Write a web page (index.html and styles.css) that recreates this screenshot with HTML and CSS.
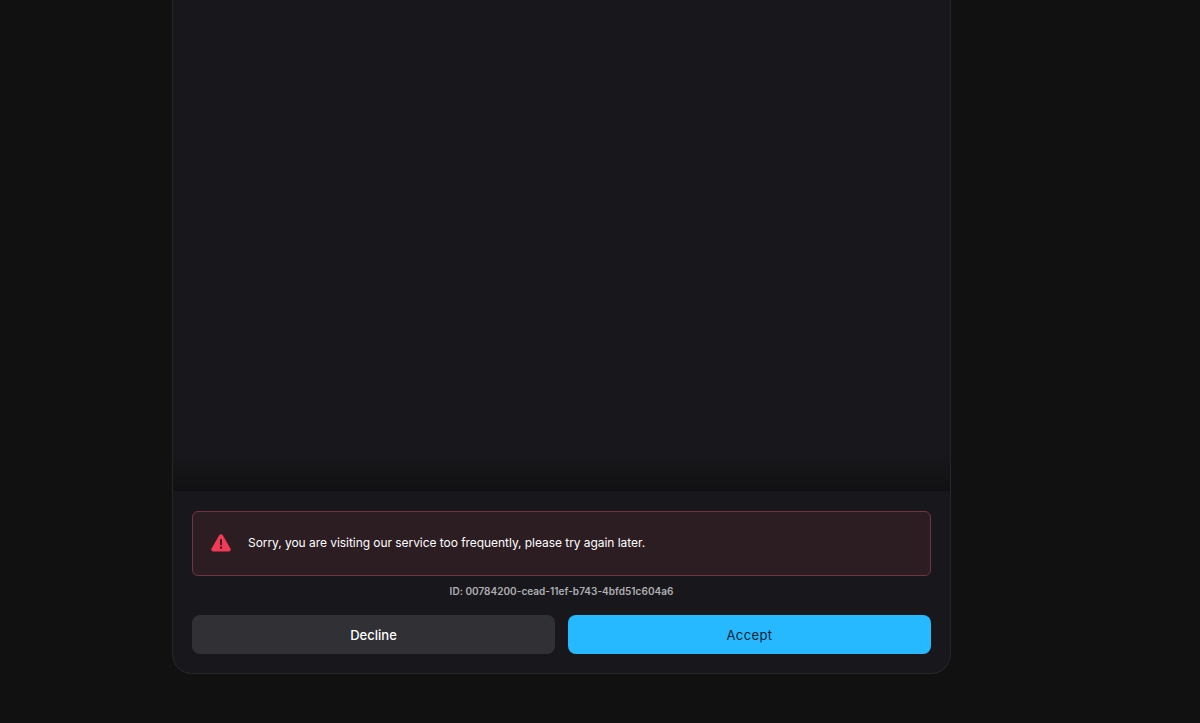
FILE: index.html
```html
<!DOCTYPE html>
<html lang="en">
<head>
<meta charset="utf-8">
<title>Sorry</title>
<link rel="stylesheet" href="styles.css">
</head>
<body>
<main class="page">
  <section class="card">
    <div class="content"></div>
    <footer class="footer">
      <div class="alert">
        <svg class="alert-icon" viewBox="0 0 20 18" width="20" height="18" aria-hidden="true">
          <path fill="#f03a56" fill-rule="evenodd" d="M8.3 1.1a2 2 0 0 1 3.4 0l7.7 13.3a2 2 0 0 1-1.7 3H2.3a2 2 0 0 1-1.7-3ZM9.1 5.2v6h1.8v-6ZM10 12.4a1.2 1.2 0 1 0 0 2.4 1.2 1.2 0 0 0 0-2.4Z"/>
        </svg>
        <p class="alert-text">Sorry, you are visiting our service too frequently, please try again later.</p>
      </div>
      <p class="request-id">ID: 00784200-cead-11ef-b743-4bfd51c604a6</p>
      <div class="actions">
        <button class="btn btn-decline" type="button">Decline</button>
        <button class="btn btn-accept" type="button">Accept</button>
      </div>
    </footer>
  </section>
</main>
</body>
</html>
```
FILE: styles.css
```css
* { box-sizing: border-box; }
html, body { margin: 0; height: 100%; }
body {
  background: #111111;
  font-family: Inter, "Liberation Sans", sans-serif;
  color: #fff;
  overflow: hidden;
}
.page {
  height: 723px;
  padding: 0 249px 49px 172px;
  display: flex;
}
.card {
  flex: 1;
  display: flex;
  flex-direction: column;
  background: #18181c;
  border: 1px solid #27272a;
  border-top: 0;
  border-radius: 0 0 20px 20px;
}
.content {
  flex: 1;
  background: linear-gradient(to bottom, #18181c 0, #18181c 455px, #111113 491px);
}
.footer {
  flex: none;
  height: 182px;
  padding: 20px 19px 19px;
  display: flex;
  flex-direction: column;
}
.alert {
  height: 65px;
  display: flex;
  align-items: center;
  gap: 17px;
  padding: 0 18px 1px;
  background: #2c1d22;
  border: 1px solid #713442;
  border-radius: 6px;
}
.alert-icon { flex: none; }
.alert-text {
  margin: 0;
  font-size: 12px;
  line-height: 20px;
  letter-spacing: -0.05px;
  color: #fff;
}
.request-id {
  margin: 8px 0 0;
  height: 14px;
  font-size: 10px;
  line-height: 14px;
  font-weight: 600;
  letter-spacing: 0.03px;
  text-align: center;
  color: #afafb2;
}
.actions {
  margin-top: 17px;
  display: grid;
  grid-template-columns: 1fr 1fr;
  gap: 13px;
}
.btn {
  height: 39px;
  border: 0;
  border-radius: 8px;
  font-family: inherit;
  font-size: 13px;
  font-weight: 500;
}
.btn-decline { background: #303035; color: #fff; }
.btn-accept {
  background: #26b9ff;
  color: #0b2230;
  font-weight: 400;
  letter-spacing: 0.4px;
}
```
